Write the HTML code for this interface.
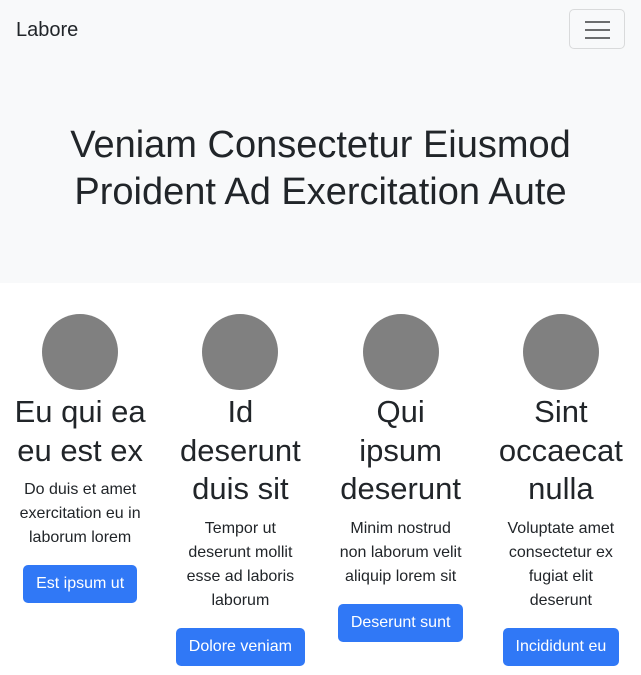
<!DOCTYPE html>
<html><head><style>
*{box-sizing:border-box;margin:0;padding:0}
body{width:641px;height:675px;overflow:hidden;font-family:"Liberation Sans",sans-serif;color:#212529;background:#fff}
.top{background:#f8f9fa;height:283px;position:relative}
.brand{position:absolute;left:16px;top:18px;font-size:20px;line-height:24px}
.tog{position:absolute;left:569px;top:9px;width:56px;height:40px;border:1px solid #d9dadb;border-radius:5px}
.tog i{position:absolute;left:15px;width:25px;height:2px;background:#6c6d6e}
h1{position:absolute;left:0;right:0;top:122px;text-align:center;font-size:38px;font-weight:500;line-height:47px}
.row{display:flex}
.col{width:160.25px;padding:31px 12px 0;text-align:center}
.c{width:76px;height:76px;border-radius:50%;background:#808080;margin:0 auto 3px}
h2{font-size:31px;font-weight:500;line-height:38.5px;margin-bottom:8px}
p{font-size:16px;line-height:24px;margin:0 4px 15px}
.b{display:inline-block;background:#3078f6;color:#fff;font-size:16px;line-height:24px;padding:7px 13px;border-radius:5px}
</style></head><body>
<div class="top"><div class="brand">Labore</div>
<div class="tog"><i style="top:11px"></i><i style="top:19px"></i><i style="top:27px"></i></div>
<h1>Veniam Consectetur Eiusmod<br>Proident Ad Exercitation Aute</h1></div>
<div class="row">
<div class="col"><div class="c"></div><h2>Eu qui ea eu est ex</h2><p>Do duis et amet exercitation eu in laborum lorem</p><span class="b">Est ipsum ut</span></div>
<div class="col"><div class="c"></div><h2>Id deserunt duis sit</h2><p>Tempor ut deserunt mollit esse ad laboris laborum</p><span class="b">Dolore veniam</span></div>
<div class="col"><div class="c"></div><h2>Qui ipsum deserunt</h2><p>Minim nostrud non laborum velit aliquip lorem sit</p><span class="b">Deserunt sunt</span></div>
<div class="col"><div class="c"></div><h2>Sint occaecat nulla</h2><p>Voluptate amet consectetur ex fugiat elit deserunt</p><span class="b">Incididunt eu</span></div>
</div>
</body></html>
